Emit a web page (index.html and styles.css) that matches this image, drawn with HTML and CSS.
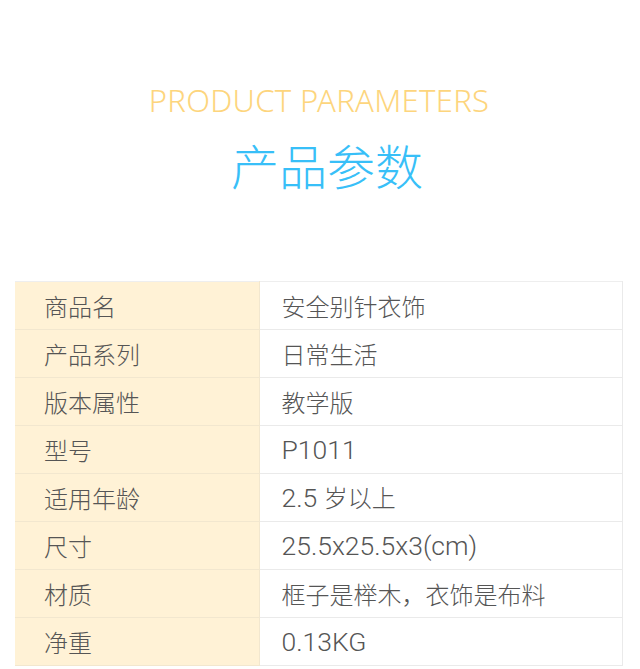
FILE: index.html
```html
<!DOCTYPE html>
<html lang="zh">
<head>
<meta charset="utf-8">
<link rel="stylesheet" href="styles.css">
</head>
<body>
<div class="page">
  <header class="head">
    <div class="en">PRODUCT PARAMETERS</div>
    <h1 class="zh">产品参数</h1>
  </header>
  <table class="params">
    <tr><th>商品名</th><td>安全别针衣饰</td></tr>
    <tr><th>产品系列</th><td>日常生活</td></tr>
    <tr><th>版本属性</th><td>教学版</td></tr>
    <tr><th>型号</th><td><span class="num">P1011</span></td></tr>
    <tr><th>适用年龄</th><td><span class="num">2.5 </span>岁以上</td></tr>
    <tr><th>尺寸</th><td><span class="num">25.5x25.5x3(cm)</span></td></tr>
    <tr><th>材质</th><td>框子是榉木，衣饰是布料</td></tr>
    <tr><th>净重</th><td><span class="num">0.13KG</span></td></tr>
  </table>
</div>
</body>
</html>
```

FILE: styles.css
```css
* { box-sizing: border-box; }
html, body { margin: 0; padding: 0; background: #fff; }
body { font-family: "Noto Sans CJK SC", "Noto Sans", sans-serif; }
.page { width: 640px; padding: 0 17px 0 15px; }
.head { padding-top: 82px; height: 281px; text-align: center; }
.en {
  font-family: "Noto Sans", sans-serif;
  font-weight: 300;
  font-size: 31px;
  line-height: 36px;
  color: #fdd57d;
  letter-spacing: 0.3px;
}
.zh {
  margin: 16px 0 0;
  padding-left: 16px;
  font-weight: 300;
  font-size: 48px;
  line-height: 60px;
  color: #38bff8;
}
.params {
  width: 608px;
  border-collapse: collapse;
  table-layout: fixed;
}
.params th, .params td {
  height: 48px;
  padding: 0;
  font-family: "Noto Sans CJK SC", sans-serif;
  font-weight: 300;
  font-size: 24px;
  line-height: 30px;
  color: #555;
  text-align: left;
  vertical-align: middle;
  border: 1px solid #eaeaea;
}
.params th {
  width: 244px;
  padding-left: 29px;
  background: #fff2d6;
  border-color: #f2e7cf;
  border-left: none;
}
.params td {
  padding-left: 22px;
  background: #fff;
}
.params .num {
  font-family: "Roboto", sans-serif;
  font-weight: 300;
  font-size: 26.5px;
}
.params tr:first-child th, .params tr:first-child td { border-top: 1px solid #eee; }
```
